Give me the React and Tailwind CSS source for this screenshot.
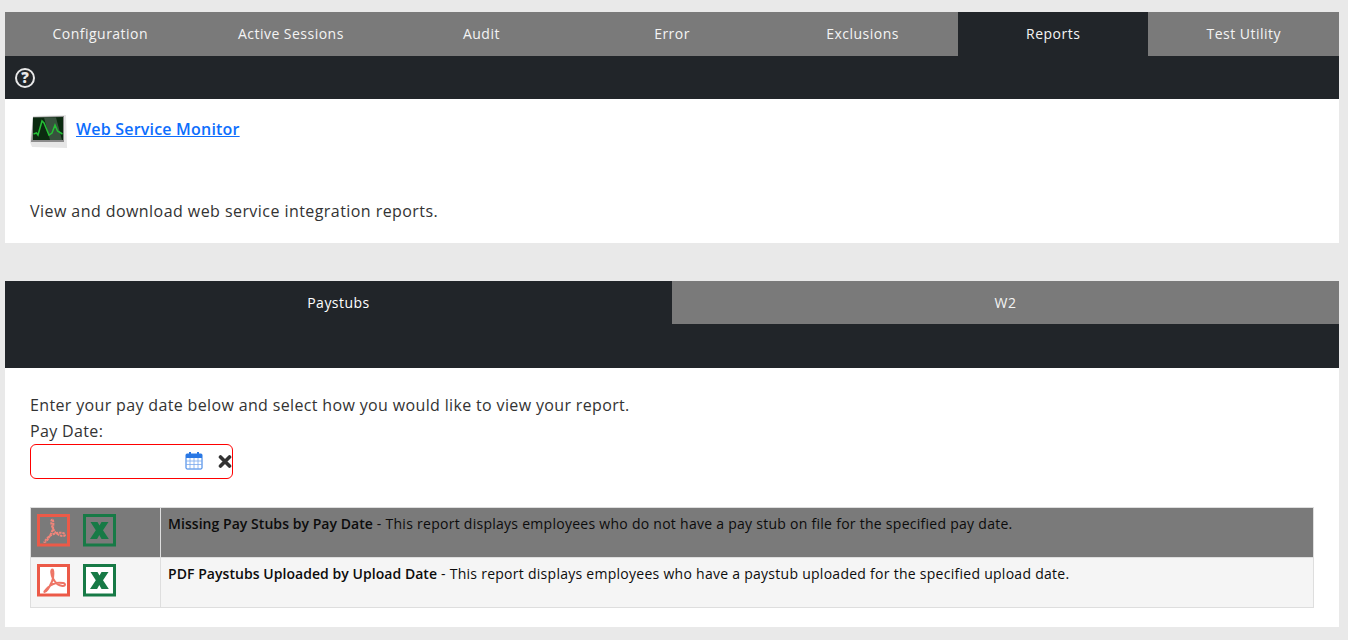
const font = "font-['Open_Sans','Liberation_Sans',sans-serif]";

function Pdf({ dark }) {
  return (
    <svg width="33" height="33" viewBox="0 0 33 33" className="block">
      <rect x="1.500" y="1.500" width="30" height="29.500" fill={dark ? "#7a7a7a" : "#fff"} stroke="#ec5a48" strokeWidth="3" />
      <path d="M15.500 5.500c-2 0-1.500 5 .5 9s5 7 9.500 7.500c3 .3 3.500-2.500 .5-3-5.500-1-11.500 1-15 4.500-3 3-4 4.500-3.500 4.500 2 0 5-5 7.500-10.500 2-4.500 1.500-12 .5-12z" fill="none" stroke={dark ? "#f0857a" : "#ee7566"} strokeWidth="2" strokeDasharray={dark ? "2.500 .8" : "none"} />
    </svg>
  );
}

function Xls({ dark }) {
  return (
    <svg width="33" height="33" viewBox="0 0 33 33" className="block">
      <rect x="1.500" y="1.500" width="30" height="29.500" fill={dark ? "#7a7a7a" : "#fff"} stroke="#177a46" strokeWidth="3" />
      <path d="M7.500 8h7l2 3.500 2-3.500h7l-5.500 8.200 5.800 8.800h-7.300l-2.200-4-2.200 4H7l5.800-8.800z" fill="#177a46" />
    </svg>
  );
}

function Monitor() {
  return (
    <svg width="38" height="33" viewBox="0 0 38 33" className="block">
      <path d="M0 27L3 1l33-1 1 33-35-1z" fill="#e6e6e6" />
      <path d="M1 27L3 2l31-1v26z" fill="#8c8c8c" />
      <path d="M3 2.500l30-.5v23H3z" fill="#0b2a10" />
      <path d="M14 2.500h12l6 22.500H20z" fill="#47604c" opacity=".75" />
      <path d="M3.500 19l3-1 1.500 2 4-14 2 2 5 12 3-2 3-8 2.500 6 5 3" fill="none" stroke="#25bf36" strokeWidth="1.500" />
    </svg>
  );
}

const topTabs = ["Configuration", "Active Sessions", "Audit", "Error", "Exclusions", "Reports", "Test Utility"];

function Row({ shaded, title, desc }) {
  return (
    <div className={shaded ? "flex h-[50px] bg-[#7a7a7a] border-b border-[#dedede]" : "flex h-[49px] bg-[#f5f5f5]"}>
      <div className="w-[130px] shrink-0 border-r border-[#dedede] pl-[6px] pt-[6px] flex gap-[13px]">
        <Pdf dark={shaded} />
        <Xls dark={shaded} />
      </div>
      <div className="pl-[7px] pt-[6px] text-[14px] leading-[20px] tracking-[0.27px] text-[#0c0c0c]">
        <b className="font-semibold tracking-[0.05px]">{title}</b> - {desc}
      </div>
    </div>
  );
}

export default function App() {
  return (
    <div className={`${font} h-[640px] overflow-hidden bg-[#e9e9e9] pt-[12px] pl-[5px] pr-[9px]`}>
      <div className="flex h-[44px] bg-[#7a7a7a]">
        {topTabs.map((t) => (
          <div key={t} className={`flex-1 pb-[1px] flex items-center justify-center text-[14px] tracking-[0.48px] font-medium text-[#f4f4f4] ${t === "Reports" ? "bg-[#212529]" : ""}`}>{t}</div>
        ))}
      </div>
      <div className="h-[43px] bg-[#212529] flex items-center pl-[10px]">
        <div className="w-[20px] h-[20px] rounded-full border-2 border-[#e8e8e8] flex items-center justify-center text-[15px] font-extrabold text-[#e8e8e8] leading-none">?</div>
      </div>
      <div className="h-[144px] bg-white pl-[25px] pt-[16px]">
        <div className="flex items-start gap-[8px] h-[33px]">
          <Monitor />
          <a href="#" className="text-[16px] leading-[28px] font-semibold tracking-[0.2px] text-[#0d6efd] underline">Web Service Monitor</a>
        </div>
        <p className="mt-[52px] text-[16px] leading-[22px] tracking-[0.44px] text-[#333]">View and download web service integration reports.</p>
      </div>

      <div className="mt-[38px] flex h-[43px]">
        <div className="flex-1 bg-[#212529] flex items-center justify-center text-[14px] tracking-[0.48px] font-medium text-white">Paystubs</div>
        <div className="flex-1 bg-[#7a7a7a] flex items-center justify-center text-[14px] tracking-[0.48px] font-medium text-[#f4f4f4]">W2</div>
      </div>
      <div className="h-[44px] bg-[#212529]" />
      <div className="h-[259px] bg-white px-[25px] pt-[26px]">
        <p className="text-[16px] leading-[22px] tracking-[0.35px] text-[#333]">Enter your pay date below and select how you would like to view your report.</p>
        <p className="mt-[4px] text-[16px] leading-[22px] tracking-[0.35px] text-[#333]">Pay Date:</p>
        <div className="mt-[2px] w-[203px] h-[35px] rounded-[6px] border border-[#ff0000] flex items-center justify-end gap-[15px]">
          <svg width="18" height="19" viewBox="0 0 18 19" className="-mt-[2px]">
            <rect x="1" y="3" width="16" height="15" rx="1" fill="#fff" stroke="#2a78e4" />
            <rect x="1" y="3" width="16" height="4" fill="#2a78e4" />
            <rect x="4" y="1" width="2" height="4" fill="#2a78e4" />
            <rect x="12" y="1" width="2" height="4" fill="#2a78e4" />
            <path d="M1 10h16M1 13.500h16M5 7v11M9 7v11M13 7v11" stroke="#7aa8ee" strokeWidth=".8" />
          </svg>
          <svg width="14" height="13" viewBox="0 0 14 13">
            <path d="M2.500 2l9 9M11.500 2l-9 9" stroke="#333" strokeWidth="3.600" strokeLinecap="round" />
          </svg>
        </div>
        <div className="mt-[28px] border border-[#dedede]">
          <Row shaded title="Missing Pay Stubs by Pay Date" desc="This report displays employees who do not have a pay stub on file for the specified pay date." />
          <Row title="PDF Paystubs Uploaded by Upload Date" desc="This report displays employees who have a paystub uploaded for the specified upload date." />
        </div>
      </div>
    </div>
  );
}
